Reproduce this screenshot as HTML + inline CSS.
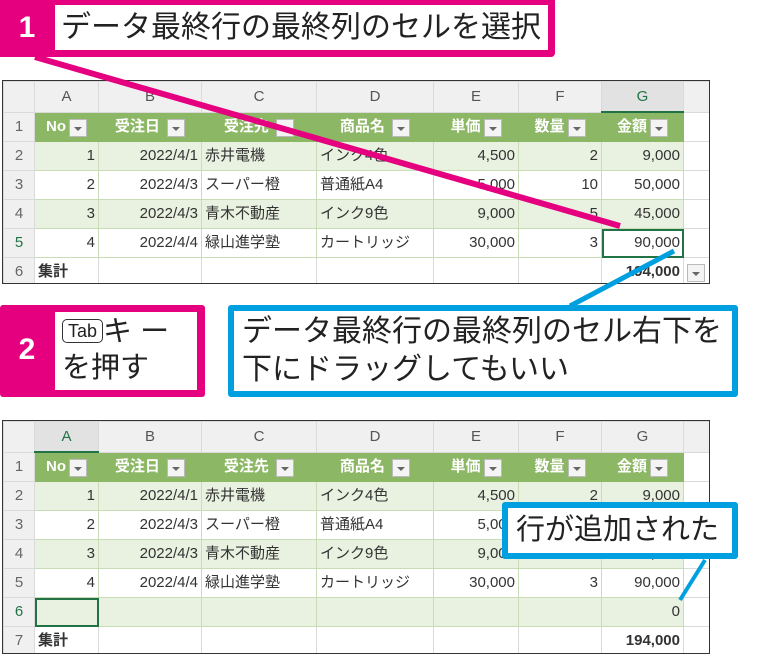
<!DOCTYPE html><html><head><meta charset="utf-8"><style>
body{margin:0;width:783px;height:652px;background:#fff;position:relative;overflow:hidden;font-family:"Liberation Sans","Noto Sans CJK JP",sans-serif}
.abs{position:absolute}
table{border-collapse:collapse;table-layout:fixed;font-size:15px;color:#333}
td{border:1px solid #dadada;padding:0 3px;white-space:nowrap;overflow:hidden;height:28px;line-height:28px}
.hd td{background:#f0f0f0;color:#555;text-align:center;font-size:15px;height:29px}
.hd td.sel{background:#e2e2e2;color:#217346;border-bottom:2px solid #217346}
td.rh{background:#f0f0f0;color:#666;text-align:center;padding:0}
tr.h1 td.c{background:#8cb764;color:#fff;font-weight:bold;text-align:center;border-color:#8cb764}
tr.b td.c{background:#e9f1e0;border-color:#c9dcb6}
tr.w td.c{background:#fff;border-color:#c9dcb6}
.r{text-align:right}
.f{display:inline-block;width:16px;height:16px;background:#f4f4f4;border:1px solid #bbb;vertical-align:middle;margin-left:3px;position:relative;top:1px}
.f:after{content:"";position:absolute;left:4px;top:7px;border-left:4px solid transparent;border-right:4px solid transparent;border-top:4px solid #666}
.num{color:#fff;font-size:30px;font-weight:bold;text-align:center}
.ctext{font-size:30px;color:#222;line-height:36px}
</style></head><body>

<div class="abs" style="left:2px;top:80px;border:1px solid #333;width:706px;height:202px;overflow:hidden">
<table style="width:706px">
<colgroup><col style="width:31px"><col style="width:64px"><col style="width:103px"><col style="width:115px"><col style="width:117px"><col style="width:85px"><col style="width:83px"><col style="width:82px"><col style="width:26px"></colgroup>
<tr class="hd"><td></td><td>A</td><td>B</td><td>C</td><td>D</td><td>E</td><td>F</td><td class="sel">G</td><td></td></tr>
<tr class="h1"><td class="rh">1</td><td class="c r">No<span class="f"></span></td><td class="c r">受注日 <span class="f"></span></td><td class="c r">受注先 <span class="f"></span></td><td class="c r">商品名 <span class="f"></span></td><td class="c r">単価<span class="f"></span></td><td class="c r">数量<span class="f"></span></td><td class="c r">金額<span class="f"></span></td><td></td></tr>
<tr class="b"><td class="rh">2</td><td class="c r">1</td><td class="c r">2022/4/1</td><td class="c">赤井電機</td><td class="c">インク4色</td><td class="c r">4,500</td><td class="c r">2</td><td class="c r">9,000</td><td></td></tr>
<tr class="w"><td class="rh">3</td><td class="c r">2</td><td class="c r">2022/4/3</td><td class="c">スーパー橙</td><td class="c">普通紙A4</td><td class="c r">5,000</td><td class="c r">10</td><td class="c r">50,000</td><td></td></tr>
<tr class="b"><td class="rh">4</td><td class="c r">3</td><td class="c r">2022/4/3</td><td class="c">青木不動産</td><td class="c">インク9色</td><td class="c r">9,000</td><td class="c r">5</td><td class="c r">45,000</td><td></td></tr>
<tr class="w"><td class="rh" style="color:#217346">5</td><td class="c r">4</td><td class="c r">2022/4/4</td><td class="c">緑山進学塾</td><td class="c">カートリッジ</td><td class="c r">30,000</td><td class="c r">3</td><td class="c r" style="outline:2px solid #217346;outline-offset:-2px">90,000</td><td></td></tr>
<tr><td class="rh">6</td><td style="font-weight:bold">集計</td><td></td><td></td><td></td><td></td><td></td><td class="r" style="font-weight:bold">194,000</td><td><span class="f" style="margin-left:0"></span></td></tr>
</table></div>

<div class="abs" style="left:2px;top:420px;border:1px solid #333;width:706px;height:232px;overflow:hidden">
<table style="width:706px">
<colgroup><col style="width:31px"><col style="width:64px"><col style="width:103px"><col style="width:115px"><col style="width:117px"><col style="width:85px"><col style="width:83px"><col style="width:82px"><col style="width:26px"></colgroup>
<tr class="hd"><td></td><td class="sel">A</td><td>B</td><td>C</td><td>D</td><td>E</td><td>F</td><td>G</td><td></td></tr>
<tr class="h1"><td class="rh">1</td><td class="c r">No<span class="f"></span></td><td class="c r">受注日 <span class="f"></span></td><td class="c r">受注先 <span class="f"></span></td><td class="c r">商品名 <span class="f"></span></td><td class="c r">単価<span class="f"></span></td><td class="c r">数量<span class="f"></span></td><td class="c r">金額<span class="f"></span></td><td></td></tr>
<tr class="b"><td class="rh">2</td><td class="c r">1</td><td class="c r">2022/4/1</td><td class="c">赤井電機</td><td class="c">インク4色</td><td class="c r">4,500</td><td class="c r">2</td><td class="c r">9,000</td><td></td></tr>
<tr class="w"><td class="rh">3</td><td class="c r">2</td><td class="c r">2022/4/3</td><td class="c">スーパー橙</td><td class="c">普通紙A4</td><td class="c r">5,000</td><td class="c r">10</td><td class="c r">50,000</td><td></td></tr>
<tr class="b"><td class="rh">4</td><td class="c r">3</td><td class="c r">2022/4/3</td><td class="c">青木不動産</td><td class="c">インク9色</td><td class="c r">9,000</td><td class="c r">5</td><td class="c r">45,000</td><td></td></tr>
<tr class="w"><td class="rh">5</td><td class="c r">4</td><td class="c r">2022/4/4</td><td class="c">緑山進学塾</td><td class="c">カートリッジ</td><td class="c r">30,000</td><td class="c r">3</td><td class="c r">90,000</td><td></td></tr>
<tr class="b"><td class="rh" style="color:#217346">6</td><td class="c" style="outline:2px solid #217346;outline-offset:-2px"></td><td class="c"></td><td class="c"></td><td class="c"></td><td class="c"></td><td class="c"></td><td class="c r">0</td><td></td></tr>
<tr><td class="rh">7</td><td style="font-weight:bold">集計</td><td></td><td></td><td></td><td></td><td></td><td class="r" style="font-weight:bold">194,000</td><td></td></tr>
</table></div>

<svg class="abs" style="left:0;top:0" width="783" height="652">
<line x1="35" y1="57" x2="620" y2="226" stroke="#e4007f" stroke-width="6"/>
<line x1="674" y1="251" x2="570" y2="306" stroke="#009fdf" stroke-width="5"/>
<line x1="705" y1="560" x2="680" y2="600" stroke="#009fdf" stroke-width="4"/>
</svg>

<div class="abs" style="left:0;top:0;width:555px;height:57px;background:#e4007f;border-radius:0 0 4px 0"></div>
<div class="abs num" style="left:0;top:8px;width:54px;line-height:40px">1</div>
<div class="abs ctext" style="left:55px;top:5px;width:493px;height:45px;background:#fff;line-height:45px;padding-left:6px;box-sizing:border-box">データ最終行の最終列のセルを選択</div>

<div class="abs" style="left:0;top:305px;width:205px;height:92px;background:#e4007f;border-radius:3px"></div>
<div class="abs num" style="left:0;top:330px;width:54px;line-height:40px">2</div>
<div class="abs ctext" style="left:55px;top:312px;width:142px;height:78px;background:#fff;padding:2px 0 0 7px;box-sizing:border-box;line-height:36px;font-size:29px"><span style="display:inline-block;border:1.5px solid #333;border-radius:5px;font-size:18px;line-height:22px;padding:0 5px;vertical-align:4px">Tab</span>キ ー<br>を押す</div>

<div class="abs ctext" style="left:228px;top:305px;width:510px;height:92px;border:6px solid #009fdf;box-sizing:border-box;border-radius:3px;padding:2px 0 0 8px;line-height:38px">データ最終行の最終列のセル右下を<br>下にドラッグしてもいい</div>

<div class="abs ctext" style="left:502px;top:502px;width:236px;height:57px;background:#fff;border:6px solid #009fdf;box-sizing:border-box;border-radius:3px;padding-left:8px;line-height:44px;font-size:29px">行が追加された</div>
</body></html>
